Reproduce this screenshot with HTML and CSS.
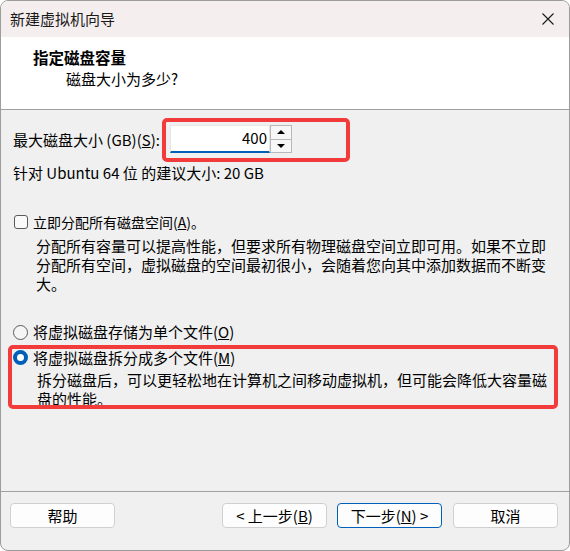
FILE: index.html
```html
<!DOCTYPE html>
<html lang="zh-CN">
<head>
    <meta charset="UTF-8">
    <title>新建虚拟机向导</title>
    <link rel="stylesheet" href="styles.css">
</head>
<body>

<div class="window">
    <div class="titlebar">
        <span class="title-text">新建虚拟机向导</span>
        <svg class="close-icon" width="12" height="12" viewBox="0 0 12 12">
            <path d="M0.5 0.5 L11.5 11.5 M11.5 0.5 L0.5 11.5" stroke="#1a1a1a" stroke-width="1.1" fill="none"/>
        </svg>
    </div>

    <div class="header">
        <div class="header-title">指定磁盘容量</div>
        <div class="header-sub">磁盘大小为多少?</div>
    </div>

    <div class="content">
        <div class="spin-row">
            <span class="spin-label">最大磁盘大小 (GB)(<u>S</u>):</span>
            <div class="mark mark-spin">
                <div class="spin-input">400</div>
                <div class="spin-buttons">
                    <div class="spin-btn"><span class="arrow-up"></span></div>
                    <div class="spin-btn"><span class="arrow-down"></span></div>
                </div>
            </div>
        </div>

        <div class="recommend">针对 Ubuntu 64 位 的建议大小: 20 GB</div>

        <div class="option check-row">
            <span class="checkbox"></span>
            <span class="check-label">立即分配所有磁盘空间(<u>A</u>)。</span>
        </div>
        <p class="desc desc-alloc">分配所有容量可以提高性能，但要求所有物理磁盘空间立即可用。如果不立即分配所有空间，虚拟磁盘的空间最初很小，会随着您向其中添加数据而不断变大。</p>

        <div class="option radio-row">
            <span class="radio"></span>
            <span>将虚拟磁盘存储为单个文件(<u>O</u>)</span>
        </div>

        <div class="mark mark-split">
            <div class="option radio-row-inner">
                <span class="radio radio-on"></span>
                <span>将虚拟磁盘拆分成多个文件(<u>M</u>)</span>
            </div>
            <p class="desc desc-split">拆分磁盘后，可以更轻松地在计算机之间移动虚拟机，但可能会降低大容量磁盘的性能。</p>
        </div>
    </div>

    <div class="footer">
        <button class="btn btn-help">帮助</button>
        <button class="btn btn-back">&lt; 上一步(<u>B</u>)</button>
        <button class="btn btn-next">下一步(<u>N</u>) &gt;</button>
        <button class="btn btn-cancel">取消</button>
    </div>
</div>

</body>
</html>
```

FILE: styles.css
```css
body {
    margin: 0;
    background: #fff;
    font-family: "Noto Sans CJK SC", "Noto Sans", sans-serif;
    font-size: 15px;
    color: #000;
}

.window {
    width: 570px;
    height: 551px;
    box-sizing: border-box;
    border: 1px solid #9c9c9c;
    border-radius: 8px;
    overflow: hidden;
    background: #f0f0f0;
    display: flex;
    flex-direction: column;
}

.titlebar {
    height: 36px;
    flex-shrink: 0;
    background: #f5eeee;
    display: flex;
    align-items: center;
    justify-content: space-between;
    padding: 0 15px 0 9px;
    color: #1a1a1a;
}

.title-text {
    line-height: 20px;
}

.header {
    flex-shrink: 0;
    background: #fff;
    border-bottom: 1px solid #a0a0a0;
    padding: 10px 0 0 32px;
    height: 62px;
}

.header-title {
    font-weight: bold;
    font-size: 15.5px;
    line-height: 20px;
}

.header-sub {
    line-height: 20px;
    margin-left: 33px;
    margin-top: 2px;
}

.content {
    flex: 1;
    padding: 8px 0 0 12px;
}

.mark {
    border: 4px solid #f23b3b;
    border-radius: 5px;
    box-sizing: border-box;
}

.spin-row {
    display: flex;
    align-items: center;
    height: 44px;
}

.spin-label {
    width: 149px;
    white-space: nowrap;
    line-height: 20px;
}

.mark-spin {
    width: 188px;
    height: 44px;
    display: flex;
    padding: 3px 0 0 4px;
}

.spin-input {
    width: 100px;
    height: 28px;
    box-sizing: border-box;
    background: #fff;
    border: 1px solid #e6e6e6;
    border-bottom: 2px solid #005fb8;
    text-align: right;
    padding-right: 2px;
    line-height: 24px;
}

.spin-buttons {
    width: 22px;
    height: 28px;
    display: flex;
    flex-direction: column;
}

.spin-btn {
    flex: 1;
    border: 1px solid #b8b8b8;
    background: #f7f7f7;
    display: flex;
    align-items: center;
    justify-content: center;
}

.spin-btn + .spin-btn {
    border-top: none;
}

.arrow-up {
    width: 0;
    height: 0;
    border-left: 4px solid transparent;
    border-right: 4px solid transparent;
    border-bottom: 4px solid #000;
}

.arrow-down {
    width: 0;
    height: 0;
    border-left: 4px solid transparent;
    border-right: 4px solid transparent;
    border-top: 4px solid #000;
}

.recommend {
    margin-top: 1px;
    line-height: 20px;
}

.option {
    display: flex;
    align-items: center;
    gap: 6px;
    white-space: nowrap;
}

.check-row {
    margin-top: 29px;
    line-height: 20px;
    margin-left: 1px;
    gap: 5px;
}

.check-label {
    font-size: 14px;
}

.checkbox {
    width: 14px;
    height: 14px;
    box-sizing: border-box;
    border: 1px solid #5a5a5a;
    border-radius: 3px;
    background: #fafafa;
}

.desc {
    margin: 0;
    line-height: 19px;
    width: 516px;
}

.desc-alloc {
    margin: 4px 0 0 23px;
}

.radio-row {
    margin-top: 29px;
    line-height: 20px;
    margin-left: 0;
    gap: 5px;
}

.radio {
    width: 15px;
    height: 15px;
    box-sizing: border-box;
    border: 1px solid #5a5a5a;
    border-radius: 50%;
    background: #f5f5f5;
}

.radio-on {
    border: 4px solid #005fb8;
    background: #fff;
}

.mark-split {
    width: 550px;
    height: 64px;
    margin: 3px 0 0 -5px;
    padding-left: 1px;
    overflow: hidden;
}

.radio-row-inner {
    line-height: 17px;
    gap: 5px;
}

.desc-split {
    margin: 4px 0 0 24px;
}

.footer {
    height: 47px;
    flex-shrink: 0;
    border-top: 1px solid #a0a0a0;
    display: flex;
    align-items: flex-start;
    padding: 11px 11px 0 9px;
}

.btn {
    width: 105px;
    height: 25px;
    box-sizing: border-box;
    border: 1px solid #d0d0d0;
    border-radius: 4px;
    background: #fdfdfd;
    font-family: inherit;
    font-size: 15px;
    color: #000;
    padding: 0;
    line-height: 21px;
}

.btn-back {
    margin-left: auto;
}

.btn-next {
    margin-left: 10px;
    border-color: #005fb8;
}

.btn-cancel {
    margin-left: 11px;
}
```
